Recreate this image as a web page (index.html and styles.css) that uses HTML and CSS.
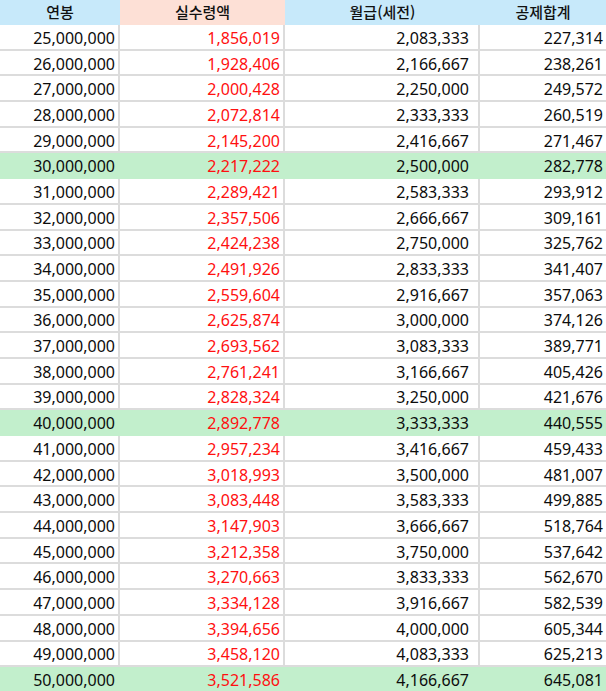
FILE: index.html
```html
<!DOCTYPE html>
<html lang="ko">
<head>
<meta charset="utf-8">
<title>연봉 실수령액 표</title>
<link rel="stylesheet" href="styles.css">
</head>
<body>
<div class="sheet">
  <div class="row head">
    <div class="cell h-blue">연봉</div>
    <div class="cell h-peach">실수령액</div>
    <div class="cell h-blue">월급(세전)</div>
    <div class="cell h-blue">공제합계</div>
  </div>
  <div class="row"><div class="cell c1">25,000,000</div><div class="cell c2">1,856,019</div><div class="cell c3">2,083,333</div><div class="cell c4">227,314</div></div>
  <div class="row"><div class="cell c1">26,000,000</div><div class="cell c2">1,928,406</div><div class="cell c3">2,166,667</div><div class="cell c4">238,261</div></div>
  <div class="row"><div class="cell c1">27,000,000</div><div class="cell c2">2,000,428</div><div class="cell c3">2,250,000</div><div class="cell c4">249,572</div></div>
  <div class="row"><div class="cell c1">28,000,000</div><div class="cell c2">2,072,814</div><div class="cell c3">2,333,333</div><div class="cell c4">260,519</div></div>
  <div class="row"><div class="cell c1">29,000,000</div><div class="cell c2">2,145,200</div><div class="cell c3">2,416,667</div><div class="cell c4">271,467</div></div>
  <div class="row hl"><div class="cell c1">30,000,000</div><div class="cell c2">2,217,222</div><div class="cell c3">2,500,000</div><div class="cell c4">282,778</div></div>
  <div class="row"><div class="cell c1">31,000,000</div><div class="cell c2">2,289,421</div><div class="cell c3">2,583,333</div><div class="cell c4">293,912</div></div>
  <div class="row"><div class="cell c1">32,000,000</div><div class="cell c2">2,357,506</div><div class="cell c3">2,666,667</div><div class="cell c4">309,161</div></div>
  <div class="row"><div class="cell c1">33,000,000</div><div class="cell c2">2,424,238</div><div class="cell c3">2,750,000</div><div class="cell c4">325,762</div></div>
  <div class="row"><div class="cell c1">34,000,000</div><div class="cell c2">2,491,926</div><div class="cell c3">2,833,333</div><div class="cell c4">341,407</div></div>
  <div class="row"><div class="cell c1">35,000,000</div><div class="cell c2">2,559,604</div><div class="cell c3">2,916,667</div><div class="cell c4">357,063</div></div>
  <div class="row"><div class="cell c1">36,000,000</div><div class="cell c2">2,625,874</div><div class="cell c3">3,000,000</div><div class="cell c4">374,126</div></div>
  <div class="row"><div class="cell c1">37,000,000</div><div class="cell c2">2,693,562</div><div class="cell c3">3,083,333</div><div class="cell c4">389,771</div></div>
  <div class="row"><div class="cell c1">38,000,000</div><div class="cell c2">2,761,241</div><div class="cell c3">3,166,667</div><div class="cell c4">405,426</div></div>
  <div class="row"><div class="cell c1">39,000,000</div><div class="cell c2">2,828,324</div><div class="cell c3">3,250,000</div><div class="cell c4">421,676</div></div>
  <div class="row hl"><div class="cell c1">40,000,000</div><div class="cell c2">2,892,778</div><div class="cell c3">3,333,333</div><div class="cell c4">440,555</div></div>
  <div class="row"><div class="cell c1">41,000,000</div><div class="cell c2">2,957,234</div><div class="cell c3">3,416,667</div><div class="cell c4">459,433</div></div>
  <div class="row"><div class="cell c1">42,000,000</div><div class="cell c2">3,018,993</div><div class="cell c3">3,500,000</div><div class="cell c4">481,007</div></div>
  <div class="row"><div class="cell c1">43,000,000</div><div class="cell c2">3,083,448</div><div class="cell c3">3,583,333</div><div class="cell c4">499,885</div></div>
  <div class="row"><div class="cell c1">44,000,000</div><div class="cell c2">3,147,903</div><div class="cell c3">3,666,667</div><div class="cell c4">518,764</div></div>
  <div class="row"><div class="cell c1">45,000,000</div><div class="cell c2">3,212,358</div><div class="cell c3">3,750,000</div><div class="cell c4">537,642</div></div>
  <div class="row"><div class="cell c1">46,000,000</div><div class="cell c2">3,270,663</div><div class="cell c3">3,833,333</div><div class="cell c4">562,670</div></div>
  <div class="row"><div class="cell c1">47,000,000</div><div class="cell c2">3,334,128</div><div class="cell c3">3,916,667</div><div class="cell c4">582,539</div></div>
  <div class="row"><div class="cell c1">48,000,000</div><div class="cell c2">3,394,656</div><div class="cell c3">4,000,000</div><div class="cell c4">605,344</div></div>
  <div class="row"><div class="cell c1">49,000,000</div><div class="cell c2">3,458,120</div><div class="cell c3">4,083,333</div><div class="cell c4">625,213</div></div>
  <div class="row hl"><div class="cell c1">50,000,000</div><div class="cell c2">3,521,586</div><div class="cell c3">4,166,667</div><div class="cell c4">645,081</div></div>
</div>
</body>
</html>
```

FILE: styles.css
```css
html, body {
  margin: 0;
  padding: 0;
  background: #ffffff;
}

body {
  font-family: "Noto Sans", "Noto Sans CJK KR", sans-serif;
  color: #0c0c0c;
  overflow: hidden;
}

.sheet {
  display: grid;
  grid-template-columns: 120px 165px 195px 1fr;
  grid-template-rows: 25px;
  grid-auto-rows: 25.7px;
  width: 606px;
}

.row {
  display: contents;
}

.cell {
  box-sizing: border-box;
  display: flex;
  align-items: center;
  justify-content: flex-end;
  font-size: 16px;
  line-height: 1;
  white-space: nowrap;
  border-right: 2px solid #dcdcdc;
  border-bottom: 2px solid #dcdcdc;
  padding-right: 3px;
  padding-top: 2px;
}

.cell.c2 {
  color: #ff1010;
}

.cell.c3 {
  padding-right: 9px;
}

.cell.c4 {
  border-right: none;
}

.head .cell {
  justify-content: center;
  font-family: "Noto Sans CJK KR", "Noto Sans", sans-serif;
  font-size: 15px;
  font-weight: 500;
  color: #111111;
  border: none;
  padding: 0 0 2px 0;
}

.h-blue {
  background: #c7e9fa;
}

.h-peach {
  background: #fde0d6;
}

.row.hl .cell {
  background: #c2efcc;
  border-color: #c2efcc;
}
```
